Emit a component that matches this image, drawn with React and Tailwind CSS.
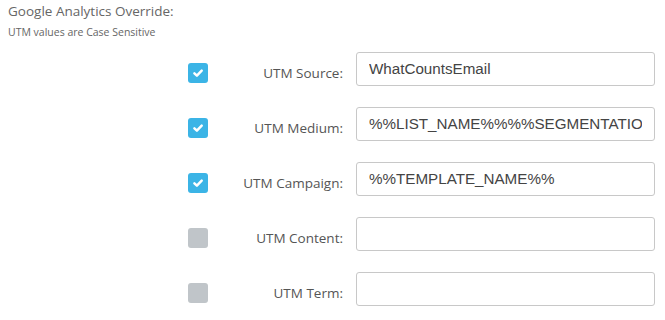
import React from 'react'

const fields = [
  { label: 'UTM Source:', value: 'WhatCountsEmail', checked: true },
  { label: 'UTM Medium:', value: '%%LIST_NAME%%%%SEGMENTATION_NAME%%', checked: true },
  { label: 'UTM Campaign:', value: '%%TEMPLATE_NAME%%', checked: true },
  { label: 'UTM Content:', value: '', checked: false },
  { label: 'UTM Term:', value: '', checked: false },
]

const CheckBox = ({ checked }) => (
  <div
    className={`mt-[11px] w-5 h-5 rounded-[3px] flex items-center justify-center ${
      checked ? 'bg-[#3bb4e6]' : 'bg-[#c0c5c9]'
    }`}
  >
    {checked && (
      <svg width="12" height="12" viewBox="0 0 12 12">
        <path d="M2.4 6.3 L4.9 8.6 L9.7 3.7" fill="none" stroke="#fff" strokeWidth="2.5" strokeLinecap="round" strokeLinejoin="round" />
      </svg>
    )}
  </div>
)

export default function App() {
  return (
    <div className="w-[665px] h-[320px] bg-white overflow-hidden font-['Open_Sans',sans-serif]">
      <div className="pl-2 pt-[1px]">
        <div className="text-[13.5px] leading-[20px] text-[#666]">Google Analytics Override:</div>
        <div className="text-[10.5px] leading-[16px] mt-[3px] text-[#666]">UTM values are Case Sensitive</div>
      </div>

      {/* UTM fields */}
      <div className="mt-[12px] pl-[188px] flex flex-col gap-[21px]">
        {fields.map((f) => (
          <div key={f.label} className="flex items-start">
            <CheckBox checked={f.checked} />
            <div className="w-[135px] mt-[11px] text-right text-[13.5px] leading-[20px] text-[#555]">{f.label}</div>
            <div className="ml-[13px] w-[299px] h-[34px] border border-[#c8c8c8] rounded-[3px] flex items-center px-[12px]">
              <div className="flex-1 overflow-hidden whitespace-nowrap text-[15.2px] text-[#444] font-['Liberation_Sans',sans-serif]">
                {f.value}
              </div>
            </div>
          </div>
        ))}
      </div>
    </div>
  )
}
